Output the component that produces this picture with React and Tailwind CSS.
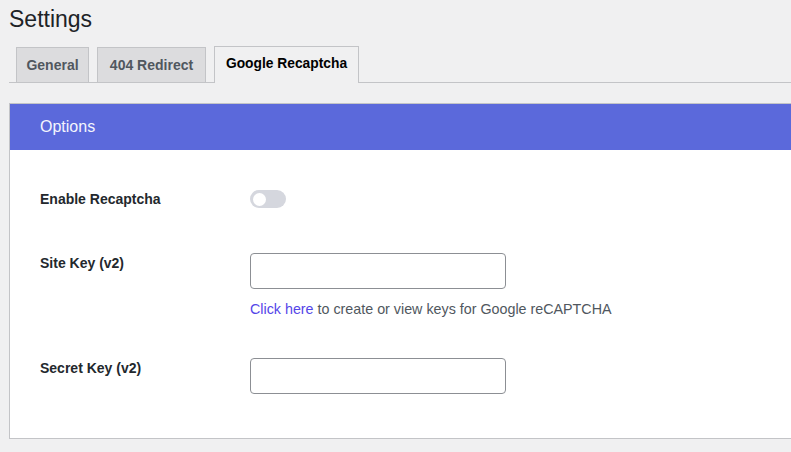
export default function App() {
  const font = { fontFamily: '"Liberation Sans", Arial, sans-serif' };
  return (
    <div className="min-h-[452px] w-[791px] overflow-hidden bg-[#f0f0f1] pl-[9px]" style={font}>
      <h1 className="pt-[5px] text-[23px] leading-[29px] font-normal text-[#1d2327]">Settings</h1>
      <div className="mt-[13px] flex items-end gap-[8px] border-b border-[#c3c4c7] pl-[7px] h-[36px]">
        <div className="-mb-px flex h-[36px] w-[73px] items-center justify-center border border-[#c3c4c7] bg-[#dcdcde] text-[14px] font-bold text-[#50575e]">General</div>
        <div className="-mb-px flex h-[36px] w-[109px] items-center justify-center border border-[#c3c4c7] bg-[#dcdcde] text-[14px] font-bold text-[#50575e]">404 Redirect</div>
        <div className="-mb-px flex h-[37px] w-[145px] items-center justify-center border border-b-0 border-[#c3c4c7] bg-[#f0f0f1] pb-px text-[13.8px] font-bold text-black">Google Recaptcha</div>
      </div>
      <div className="mt-[20px] h-[336px] border border-r-0 border-[#c3c4c7] bg-white">
        <div className="flex h-[46px] items-center bg-[#5b69db] pl-[30px] text-[16px] text-[#f4f5fd]">Options</div>
        <div className="pl-[30px]">
          <div className="flex h-[50px] items-center mt-[24px]">
            <div className="w-[210px] text-[14px] font-bold text-[#23282d]">Enable Recaptcha</div>
            <div className="flex h-[18px] w-[36px] items-center rounded-full bg-[#d5d7de] px-[3px]">
              <div className="h-[13px] w-[13px] rounded-full bg-white" />
            </div>
          </div>
          <div className="mt-[29px] flex">
            <div className="w-[210px] text-[14px] leading-[20px] font-bold text-[#23282d]">Site Key (v2)</div>
            <div>
              <div className="h-[36px] w-[256px] rounded-[4px] border border-[#8c8f94] bg-white" />
              <p className="mt-[10px] text-[14.3px] text-[#50575e]">
                <span className="text-[#5546e8]">Click here</span> to create or view keys for Google reCAPTCHA
              </p>
            </div>
          </div>
          <div className="mt-[38px] flex">
            <div className="w-[210px] text-[14px] leading-[20px] font-bold text-[#23282d]">Secret Key (v2)</div>
            <div className="h-[36px] w-[256px] rounded-[4px] border border-[#8c8f94] bg-white" />
          </div>
        </div>
      </div>
    </div>
  );
}
